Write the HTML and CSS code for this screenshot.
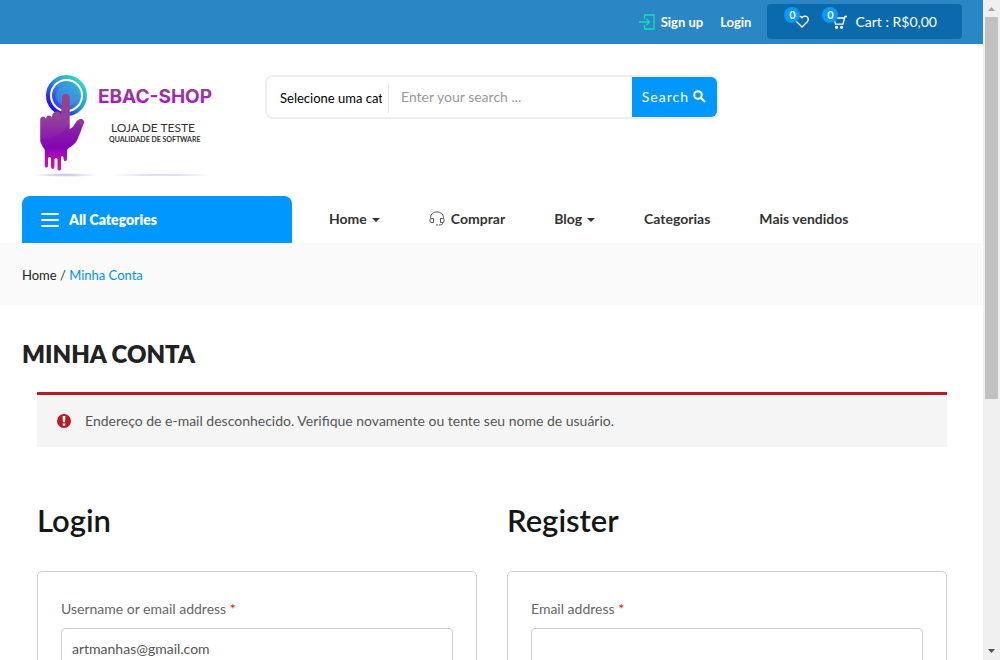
FILE: index.html
```
<!DOCTYPE html>
<html lang="pt-BR">
<head>
<meta charset="utf-8">
<meta name="viewport" content="width=device-width, initial-scale=1">
<title>Minha Conta</title>
<link rel="stylesheet" href="styles.css">
</head>
<body>
<div class="window">
  <div class="page">
    <div class="topbar">
      <a class="top-link signup" href="#">
        <svg width="16" height="16" viewBox="0 0 16 16" fill="none" stroke="#0fe3b4" stroke-width="1.3"><path d="M5.5 5V1H15V15H5.5V11M0 8H10.5M7.5 5L10.5 8L7.5 11"/></svg>
        Sign up</a>
      <a class="top-link" href="#">Login</a>
      <div class="cart-box">
        <a class="counter" href="#" aria-label="Wishlist">
          <svg width="14" height="13" viewBox="0 0 14 13" fill="none" stroke="#fff" stroke-width="1.3"><path d="M7 12L1.7 6.8C.4 5.4.4 3.2 1.7 2C3 .7 5.2.7 6.3 2L7 2.8L7.7 2C8.8.7 11 .7 12.3 2C13.6 3.2 13.6 5.4 12.3 6.8Z"/></svg>
          <span class="badge">0</span>
        </a>
        <a class="counter" href="#">
          <svg width="14" height="14" viewBox="0 0 14 14" fill="none" stroke="#fff" stroke-width="1.3"><path d="M14 1.500H12L10 9.200H2.500L0.800 3H11.500"/><circle cx="3.600" cy="12.300" r="1" fill="#fff"/><circle cx="8.600" cy="12.300" r="1" fill="#fff"/></svg>
          <span class="badge">0</span>
          <span class="cart-text">Cart : R$0,00</span>
        </a>
      </div>
    </div>

    <header class="header">
      <a class="logo" href="#" aria-label="EBAC-SHOP">
        <svg width="208" height="120" viewBox="22 64 208 120">
          <defs>
            <linearGradient id="ring" x1="0" y1="1" x2="1" y2="0"><stop offset=".1" stop-color="#2a00ff"/><stop offset=".55" stop-color="#249bd7"/><stop offset="1" stop-color="#37edb6"/></linearGradient>
            <linearGradient id="disc" x1="0" y1="1" x2="1" y2="0"><stop offset="0" stop-color="#3029ed"/><stop offset=".6" stop-color="#3b8fdf"/><stop offset="1" stop-color="#35c7ca"/></linearGradient>
            <linearGradient id="hand" x1="0" y1="94" x2="0" y2="171" gradientUnits="userSpaceOnUse"><stop offset="0" stop-color="#964587"/><stop offset=".35" stop-color="#933c9c"/><stop offset=".7" stop-color="#8705bb"/><stop offset="1" stop-color="#e511ad"/></linearGradient>
            <linearGradient id="word" x1="0" y1="88" x2="0" y2="104" gradientUnits="userSpaceOnUse"><stop offset="0" stop-color="#914982"/><stop offset="1" stop-color="#ac0fdc"/></linearGradient>
            <radialGradient id="shade"><stop offset="0" stop-color="#bdbbe3"/><stop offset="1" stop-color="#fff"/></radialGradient>
          </defs>
          <ellipse cx="65" cy="175" rx="32" ry="2" fill="url(#shade)"/>
          <ellipse cx="162" cy="175" rx="58" ry="1" fill="url(#shade)"/>
          <circle cx="66.500" cy="95.500" r="18.500" fill="#fff" stroke="url(#ring)" stroke-width="4"/>
          <circle cx="66.500" cy="95.500" r="14.500" fill="url(#disc)"/>
          <circle cx="66.500" cy="95.500" r="10.500" fill="#3b9fe0" opacity=".6"/>
          <path fill="url(#hand)" d="M62 97.500C62 92.500 69.700 92.500 69.700 97.500V129C74 128 76 120 79 119.500C82 118 85 120.500 84 123C81 130 79 137 76 142C73 146 69 147 67 150V159C66.500 162 64 162 63.500 159V157C62.500 155.500 61 156 61 158V169C60.500 171 58 171 57.500 169V159C57 157.500 54.500 157.500 54.500 160V167C54 169.500 51.500 169.500 51 167V158C50.500 156.500 48 156.500 48 158.500V166C47.500 168 45 168 44.800 166V150C43 147 41 144 40.200 141V119C41 115.500 45 115.500 46 119C46 114.500 51 114.500 52 117.500C52 110 60.500 110 61 114.500Z"/>
          <path fill="#7505a8" opacity=".28" d="M41 139C53 139 65 133 69 123V129C72 129 74 125 77 121L82 126C79 133 78 139 75 143C69 148 67 149 46 149Z"/>
          <text class="logo-name" x="98" y="103" fill="url(#word)">EBAC-SHOP</text>
          <text class="logo-line" x="111" y="132">LOJA DE TESTE</text>
          <text class="logo-small" x="109" y="142">QUALIDADE DE SOFTWARE</text>
        </svg>
      </a>
      <form class="search" onsubmit="return false">
        <select class="search-cat" aria-label="Categoria"><option>Selecione uma categoria</option></select>
        <input class="search-input" type="text" placeholder="Enter your search ..." aria-label="Search">
        <button class="search-button" type="submit">Search
          <svg width="13" height="13" viewBox="0 0 13 13" fill="none" stroke="#fff" stroke-width="2"><circle cx="5" cy="5" r="3.800"/><path d="M7.800 7.800L12 12"/></svg>
        </button>
      </form>
    </header>

    <div class="nav-row">
      <button class="all-cats" type="button">
        <svg width="18" height="14" viewBox="0 0 18 14" stroke="#fff" stroke-width="2" stroke-linecap="round"><path d="M1 1H17M1 7H17M1 13H17"/></svg>
        All Categories</button>
      <nav class="menu">
        <a href="#">Home <span class="caret"></span></a>
        <a href="#"><svg class="headset" width="16" height="15" viewBox="0 0 16 15" fill="none" stroke="#555" stroke-width="1"><path d="M1.500 7.500V6.500C1.500-1 14.500-1 14.500 6.500V7.500M4.500 7.500H2C1 7.500 1 8 1 9V10C1 11 1.500 11.500 2 11.500H4.500ZM11.500 7.500H14C15 7.500 15 8 15 9V10C15 11 14.500 11.500 14 11.500H11.500ZM14 11.500C14 13.500 12 14 10 14M7 14H9"/></svg>Comprar</a>
        <a href="#">Blog <span class="caret"></span></a>
        <a href="#">Categorias</a>
        <a href="#">Mais vendidos</a>
      </nav>
    </div>

    <div class="crumbs"><a href="#">Home</a> / <span class="current">Minha Conta</span></div>

    <main class="content">
      <h1 class="title">MINHA CONTA</h1>
      <div class="account">
        <div class="notice" role="alert">
          <svg width="14" height="14" viewBox="0 0 14 14"><circle cx="7" cy="7" r="7" fill="#b81c23"/><path d="M5.600 2H8.400L8 8.200H6ZM5.800 9.400H8.200V11.700H5.800Z" fill="#fff"/></svg>
          <span>Endereço de e-mail desconhecido. Verifique novamente ou tente seu nome de usuário.</span>
        </div>
        <div class="columns">
          <section>
            <h2 class="form-title">Login</h2>
            <form class="form-box">
              <label for="username">Username or email address <span class="required">*</span></label>
              <input class="field" id="username" type="text" value="artmanhas@gmail.com">
            </form>
          </section>
          <section>
            <h2 class="form-title">Register</h2>
            <form class="form-box">
              <label for="email">Email address <span class="required">*</span></label>
              <input class="field" id="email" type="email">
            </form>
          </section>
        </div>
      </div>
    </main>
  </div>
  <div class="scrollbar" aria-hidden="true">
    <svg width="17" height="17" viewBox="0 0 17 17"><path d="M5 11L8.500 7L12 11Z" fill="#a3a3a3"/></svg>
    <div class="track"><div class="thumb"></div></div>
    <svg width="17" height="17" viewBox="0 0 17 17"><path d="M5 6L8.500 10L12 6Z" fill="#505050"/></svg>
  </div>
</div>
</body>
</html>
```
FILE: styles.css
```
* { box-sizing: border-box; }
body {
  margin: 0;
  font-family: Lato, "Liberation Sans", sans-serif;
  font-size: 14px;
  line-height: 24px;
  color: #555;
  background: #fff;
}
a { color: inherit; text-decoration: none; }
button, input, select { font: inherit; }
svg { flex: none; display: block; }
.window { display: flex; height: 100vh; overflow: hidden; }
.page { flex: 1; min-width: 0; overflow: hidden; }

.topbar {
  display: flex;
  align-items: center;
  justify-content: flex-end;
  height: 44px;
  padding: 0 21px 1px;
  background: #2a86c4;
  color: #fff;
}
.top-link {
  display: flex;
  align-items: center;
  gap: 6px;
  margin-right: 16px;
  font-size: 13px;
  font-weight: 700;
}
.top-link.signup { margin-right: 17px; }
.cart-box {
  display: flex;
  align-items: center;
  gap: 24px;
  height: 35px;
  padding: 0 25px 0 28px;
  border-radius: 4px;
  background: #0b6aab;
}
.counter { position: relative; display: flex; align-items: center; gap: 8px; }
.badge {
  position: absolute;
  left: -11px;
  top: 50%;
  width: 16px;
  height: 16px;
  margin-top: -15px;
  border-radius: 8px;
  background: #0898ff;
  font-size: 11px;
  font-weight: 700;
  line-height: 16px;
  text-align: center;
}

.header { display: flex; align-items: flex-start; gap: 35px; padding: 20px 22px 0; height: 152px; }
.logo-name { font: 700 19px Inter, sans-serif; }
.logo-line { font: 12px Lato, sans-serif; fill: #333; }
.logo-small { font: 700 7px Lato, sans-serif; fill: #333; }
.search {
  display: flex;
  width: 454px;
  height: 44px;
  margin-top: 11px;
  border: 2px solid #eee;
  border-radius: 8px;
  overflow: hidden;
}
.search-cat {
  appearance: none;
  width: 122px;
  margin: 6px 0 4px;
  padding: 0 6px 0 13px;
  border: 0;
  border-right: 1px solid #e8e8e8;
  background: #fff;
  color: #000;
  font-size: 13px;
}
.search-input { flex: 1; min-width: 0; padding: 0 12px; border: 0; color: #555; }
.search-input::placeholder { color: #999; }
.search-button {
  display: flex;
  align-items: center;
  gap: 4px;
  padding: 0 11px 1px 10px;
  border: 0;
  background: #0098ff;
  color: #fff;
  letter-spacing: 1px;
}

.nav-row { display: flex; padding: 0 22px; height: 48px; border-bottom: 1px solid #fafafa; }
.all-cats {
  display: flex;
  align-items: center;
  gap: 10px;
  width: 270px;
  padding: 0 19px;
  border: 0;
  border-radius: 8px 8px 0 0;
  background: #0098ff;
  color: #fff;
  font-weight: 800;
}
.menu {
  display: flex;
  align-items: center;
  gap: 49px;
  padding: 0 0 2px 37px;
  color: #333;
  font-weight: 700;
}
.menu a { display: flex; align-items: center; white-space: nowrap; }
.caret {
  margin: 3px 0 0 5px;
  border: 4px solid transparent;
  border-top-color: #333;
  border-bottom: 0;
}
.headset { margin-right: 6px; }
.crumbs { padding: 19px 22px 18px; background: #fafafa; font-size: 13px; color: #333; }
.crumbs a { color: #222; }
.crumbs .current { color: #0090ff; }

.content { padding: 33px 21px 0 22px; }
.title { margin: 0; font-size: 24px; font-weight: 800; line-height: 32px; color: #222; }
.account { padding: 22px 15px 0; }
.notice {
  display: flex;
  align-items: center;
  gap: 14px;
  padding: 14px 20px;
  border-top: 3px solid #b81c23;
  background: #f5f5f5;
}
.columns { display: grid; grid-template-columns: 1fr 1fr; gap: 30px; padding-top: 55px; }
.form-title { margin: 0 0 33px; font-size: 31px; font-weight: 600; line-height: 36px; color: #161616; }
.form-box { padding: 23px; border: 1px solid #ccc; border-radius: 5px; }
.form-box label { display: block; line-height: 28px; color: #666; }
.required { color: #f00; }
.field {
  display: block;
  width: 100%;
  height: 40px;
  margin-top: 5px;
  padding: 0 10px;
  border: 1px solid #ccc;
  border-radius: 4px;
  color: #555;
}

.scrollbar { display: flex; flex-direction: column; width: 17px; background: #f0f0f0; }
.track { flex: 1; padding: 0 2px; }
.thumb { height: 61%; background: #c1c1c1; }
```
